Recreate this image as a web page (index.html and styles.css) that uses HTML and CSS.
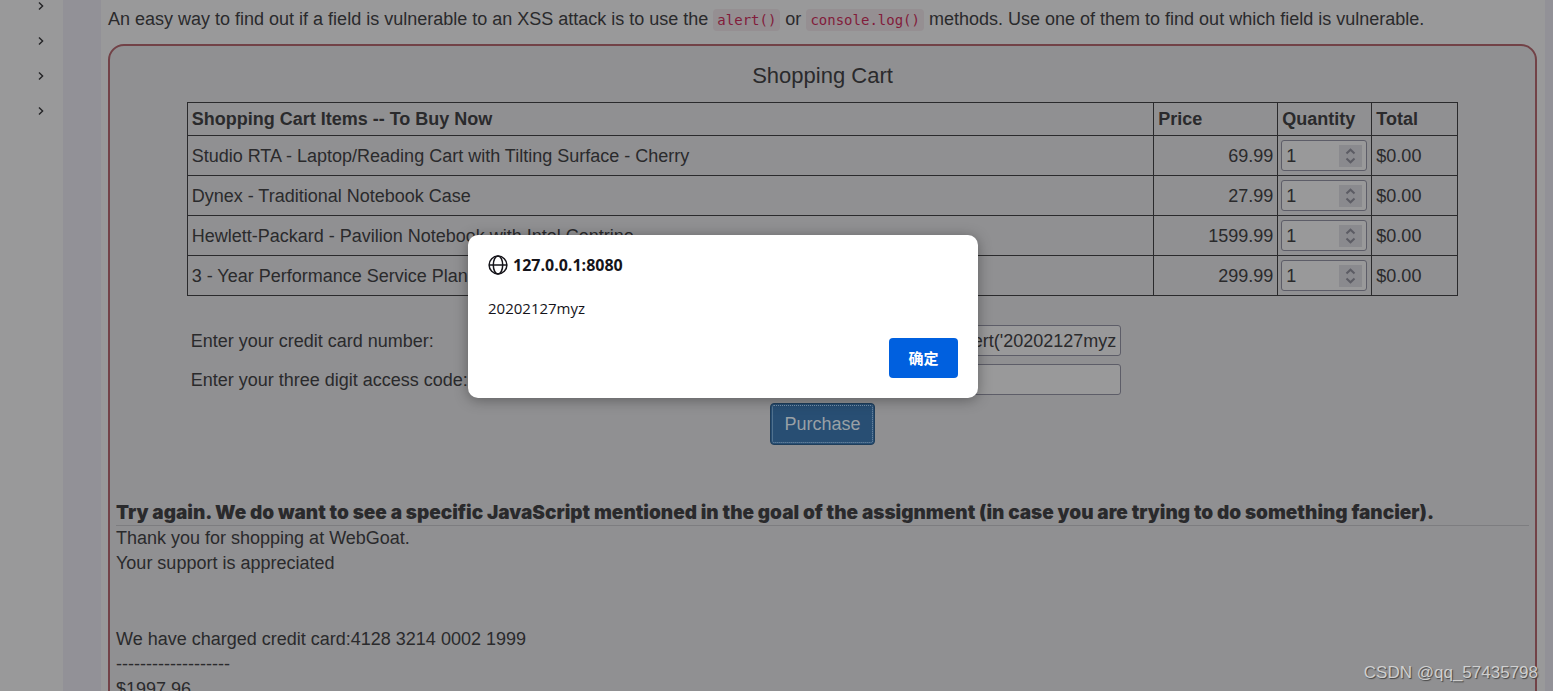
FILE: index.html
```
<!DOCTYPE html>
<html lang="en">
<head>
<meta charset="utf-8">
<title>WebGoat</title>
<link rel="stylesheet" href="styles.css">
</head>
<body>
<svg class="defs" aria-hidden="true">
  <symbol id="chevron" viewBox="0 0 6 10"><path d="M1 1.500 4.600 5 1 8.500"/></symbol>
  <symbol id="steps" viewBox="0 0 23 22"><path d="M7.500 8.500 11.500 4.700l4 3.800M7.500 13.500l4 3.800 4-3.800"/></symbol>
</svg>
<div class="app">
  <nav class="sidebar" aria-label="Lessons">
    <button class="toggle" aria-label="Expand section 1"><svg><use href="#chevron"/></svg></button>
    <button class="toggle" aria-label="Expand section 2"><svg><use href="#chevron"/></svg></button>
    <button class="toggle" aria-label="Expand section 3"><svg><use href="#chevron"/></svg></button>
    <button class="toggle" aria-label="Expand section 4"><svg><use href="#chevron"/></svg></button>
  </nav>
  <main class="lesson">
    <p class="intro">An easy way to find out if a field is vulnerable to an XSS attack is to use the <code>alert()</code> or <code>console.log()</code> methods. Use one of them to find out which field is vulnerable.</p>
    <section class="attack">
      <h1 class="title">Shopping Cart</h1>
      <form class="cart">
        <table class="items">
          <thead>
            <tr><th>Shopping Cart Items -- To Buy Now</th><th class="price">Price</th><th class="qty">Quantity</th><th class="total">Total</th></tr>
          </thead>
          <tbody>
            <tr><td>Studio RTA - Laptop/Reading Cart with Tilting Surface - Cherry</td><td class="num">69.99</td><td class="cell"><span class="stepper"><input type="number" value="1" aria-label="Quantity of reading cart"><svg><use href="#steps"/></svg></span></td><td>$0.00</td></tr>
            <tr><td>Dynex - Traditional Notebook Case</td><td class="num">27.99</td><td class="cell"><span class="stepper"><input type="number" value="1" aria-label="Quantity of notebook case"><svg><use href="#steps"/></svg></span></td><td>$0.00</td></tr>
            <tr><td>Hewlett-Packard - Pavilion Notebook with Intel Centrino</td><td class="num">1599.99</td><td class="cell"><span class="stepper"><input type="number" value="1" aria-label="Quantity of notebook"><svg><use href="#steps"/></svg></span></td><td>$0.00</td></tr>
            <tr><td>3 - Year Performance Service Plan $1000 and Over</td><td class="num">299.99</td><td class="cell"><span class="stepper"><input type="number" value="1" aria-label="Quantity of service plan"><svg><use href="#steps"/></svg></span></td><td>$0.00</td></tr>
          </tbody>
        </table>
        <div class="fields">
          <label for="card">Enter your credit card number:</label>
          <input id="card" type="text" value="alert('20202127myz">
          <label for="code">Enter your three digit access code:</label>
          <input id="code" type="text">
        </div>
        <button class="purchase" type="button">Purchase</button>
      </form>
      <div class="feedback">Try again. We do want to see a specific JavaScript mentioned in the goal of the assignment (in case you are trying to do something fancier).</div>
      <div class="output">
        <p>Thank you for shopping at WebGoat.<br>Your support is appreciated</p>
        <p class="receipt">We have charged credit card:4128 3214 0002 1999<br>-------------------<br>$1997.96</p>
      </div>
    </section>
  </main>
</div>
<div class="dialog" role="dialog" aria-labelledby="origin">
  <div class="origin">
    <svg viewBox="0 0 20 20"><circle cx="10" cy="10" r="8.900"/><ellipse cx="10" cy="10" rx="4.700" ry="8.900"/><path d="M1 10h18"/></svg>
    <strong id="origin">127.0.0.1:8080</strong>
  </div>
  <p class="message">20202127myz</p>
  <button class="confirm" type="button" lang="zh-CN">确定</button>
</div>
<div class="watermark">CSDN @qq_57435798</div>
</body>
</html>
```
FILE: styles.css
```
* { box-sizing: border-box; }
body {
  margin: 0;
  height: 100vh;
  overflow: hidden;
  position: relative;
  background: #929197;
  color: #2a2a2c;
  font: 18px/25px "Liberation Sans", Arial, sans-serif;
}
p { margin: 0; }
button, input { font: inherit; color: inherit; }
.defs { display: none; }
.app { display: flex; min-height: 100%; }
.sidebar {
  width: 63px;
  flex: none;
  padding-right: 19px;
  background: #99999a;
  display: flex;
  flex-direction: column;
  align-items: flex-end;
  gap: 10px;
  margin-top: -7px;
}
.toggle { border: 0; background: none; padding: 0; width: 6px; height: 25px; display: flex; align-items: center; }
.toggle svg { width: 6px; height: 10px; }
#chevron path { fill: none; stroke: #242426; stroke-width: 1.4; }
.lesson {
  flex: 1;
  min-width: 0;
  margin: 0 8px 0 38px;
  padding: 7px 8px 0 7px;
  background: #99999a;
}
.intro { white-space: nowrap; margin-bottom: 12px; }
code {
  padding: 3px 4px;
  border-radius: 4px;
  background: #958f92;
  color: #821c3b;
  font: 14px/20px "DejaVu Sans Mono", monospace;
}
.attack {
  border: 2px solid #724247;
  border-radius: 16px;
  background: #909092;
  padding: 14px 6px 40px;
}
.title { margin: 0 0 10px; text-align: center; font-size: 22px; line-height: 32px; font-weight: 400; }
.cart { width: 90%; margin: 0 auto; display: flex; flex-direction: column; align-items: center; }
.items { width: 100%; border-collapse: collapse; table-layout: fixed; }
.items th, .items td { border: 1px solid #2a2a2c; padding: 5px 4px 3px; height: 40px; text-align: left; white-space: nowrap; }
.items th { height: 33px; padding: 3px 4px; }
.items .price { width: 124px; }
.items .qty { width: 94px; }
.items .total { width: 86px; }
.items .num { text-align: right; }
.items .cell { padding: 0 3px; }
.stepper { display: flex; position: relative; }
input {
  border: 1px solid #5d5d68;
  border-radius: 3px;
  background: #99999a;
  height: 31px;
  padding: 1px 4px 0;
  min-width: 0;
  appearance: none;
}
.stepper input { width: 86px; appearance: textfield; }
.stepper svg { position: absolute; right: 6px; top: 5px; width: 23px; height: 22px; background: #8a8a8e; }
#steps path { fill: none; stroke: #5c5c64; stroke-width: 2; }
.fields {
  width: 100%;
  margin-top: 29px;
  padding-left: 4px;
  display: grid;
  grid-template-columns: 57% 208px;
  row-gap: 8px;
  align-items: center;
}
.fields label { padding-top: 2px; }
.fields input { text-align: right; }
.purchase {
  margin-top: 8px;
  height: 42px;
  padding: 0 13px;
  border: 1px solid #1f3e5b;
  border-radius: 4px;
  background: #284e73;
  color: #99a0a6;
  outline: 1px dotted #7993aa;
  outline-offset: -3px;
}
.feedback {
  margin-top: 55px;
  border-bottom: 1px solid #7d7d80;
  font: 900 19px/25px Inter, sans-serif;
  white-space: nowrap;
}
.receipt { margin-top: 51px; }
.dialog {
  position: absolute;
  left: 468px;
  top: 235px;
  width: 510px;
  padding: 20px;
  border-radius: 10px;
  background: #fff;
  color: #15141a;
  box-shadow: 0 2px 14px rgb(0 0 0 / 35%);
  font: 15px/22px "Open Sans", "Noto Sans CJK SC", sans-serif;
  display: flex;
  flex-direction: column;
}
.origin { display: flex; align-items: center; gap: 5px; font-size: 16px; line-height: 20px; }
.origin svg { width: 20px; height: 20px; fill: none; stroke: #15141a; stroke-width: 1.5; }
.message { margin: 22px 0 19px; }
.confirm {
  align-self: flex-end;
  width: 69px;
  height: 40px;
  border: 0;
  border-radius: 4px;
  background: #0060df;
  color: #fff;
  font-weight: 700;
}
.watermark {
  position: absolute;
  right: 15px;
  bottom: 6px;
  color: #cfcfcf;
  font: 17px/24px "Liberation Sans", Arial, sans-serif;
  text-shadow: 1px 1px 1px #444;
}
```
